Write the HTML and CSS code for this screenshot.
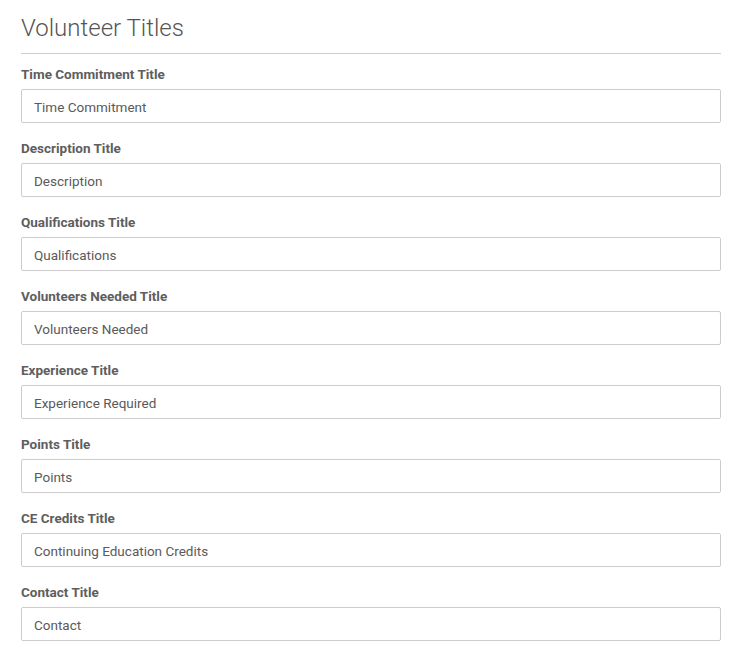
FILE: index.html
```html
<!DOCTYPE html>
<html>
<head>
<meta charset="utf-8">
<link rel="stylesheet" href="styles.css">
</head>
<body>
<div class="panel">
  <h2 class="title">Volunteer Titles</h2>
  <hr class="rule">
  <div class="group">
    <label class="label">Time Commitment Title</label>
    <input class="field" type="text" value="Time Commitment">
  </div>
  <div class="group">
    <label class="label">Description Title</label>
    <input class="field" type="text" value="Description">
  </div>
  <div class="group">
    <label class="label">Qualifications Title</label>
    <input class="field" type="text" value="Qualifications">
  </div>
  <div class="group">
    <label class="label">Volunteers Needed Title</label>
    <input class="field" type="text" value="Volunteers Needed">
  </div>
  <div class="group">
    <label class="label">Experience Title</label>
    <input class="field" type="text" value="Experience Required">
  </div>
  <div class="group">
    <label class="label">Points Title</label>
    <input class="field" type="text" value="Points">
  </div>
  <div class="group">
    <label class="label">CE Credits Title</label>
    <input class="field" type="text" value="Continuing Education Credits">
  </div>
  <div class="group">
    <label class="label">Contact Title</label>
    <input class="field" type="text" value="Contact">
  </div>
</div>
</body>
</html>
```
FILE: styles.css
```css
html, body {
  margin: 0;
  padding: 0;
  background: #ffffff;
}
body {
  font-family: Roboto, "Liberation Sans", sans-serif;
  color: #555555;
}
.panel {
  width: 700px;
  padding: 13px 0 0 21px;
}
.title {
  margin: 0;
  font-size: 24px;
  line-height: 30px;
  font-weight: 300;
  color: #555555;
}
.rule {
  margin: 10px 0 11px 0;
  border: 0;
  border-top: 1px solid #cccccc;
  height: 0;
}
.group {
  display: flex;
  flex-direction: column;
  margin-bottom: 16px;
}
.label {
  display: block;
  font-size: 13.5px;
  line-height: 18px;
  font-weight: 700;
  color: #5e5e5e;
  margin-bottom: 6px;
}
.field {
  box-sizing: border-box;
  width: 100%;
  height: 34px;
  margin: 0;
  padding: 1px 12px 0 12px;
  border: 1px solid #cccccc;
  border-radius: 2px;
  font-family: Roboto, "Liberation Sans", sans-serif;
  font-size: 13.5px;
  color: #5a5a5a;
  background: #ffffff;
  outline: none;
}
```
